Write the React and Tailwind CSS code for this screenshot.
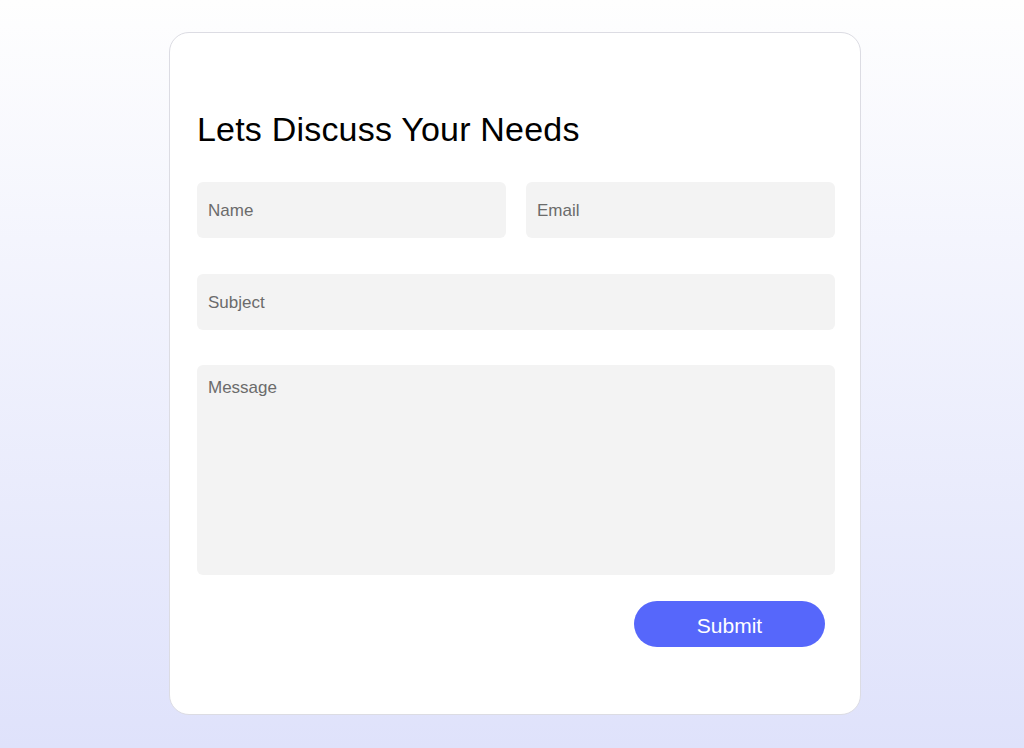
export default function App() {
  const font = { fontFamily: '"Liberation Sans", Arial, sans-serif' };
  return (
    <div
      className="w-full min-h-[748px] bg-gradient-to-b from-[#fefefe] to-[#dfe2fb] flex justify-start pl-[169px] pt-[32px]"
      style={font}
    >
      <div className="w-[692px] h-[683px] bg-white border border-[#dcdce3] rounded-[20px] pl-[27px] pr-[25px] pt-[76px] flex flex-col">
        <h1 className="text-[34px] leading-[40px] text-black font-normal tracking-[0.2px]">
          Lets Discuss Your Needs
        </h1>
        <div className="mt-[33px] grid grid-cols-2 gap-x-[20px]">
          <input
            placeholder="Name"
            className="h-[56px] bg-[#f3f3f3] rounded-[6px] px-[11px] pt-[2px] text-[17px] text-[#333] placeholder:text-[#6b6b6b] outline-none"
          />
          <input
            placeholder="Email"
            className="h-[56px] bg-[#f3f3f3] rounded-[6px] px-[11px] pt-[2px] text-[17px] text-[#333] placeholder:text-[#6b6b6b] outline-none"
          />
        </div>
        <input
          placeholder="Subject"
          className="mt-[36px] h-[56px] bg-[#f3f3f3] rounded-[6px] px-[11px] pt-[2px] text-[17px] text-[#333] placeholder:text-[#6b6b6b] outline-none"
        />
        <textarea
          placeholder="Message"
          className="mt-[35px] h-[210px] resize-none bg-[#f3f3f3] rounded-[6px] px-[11px] pt-[12px] text-[17px] leading-[22px] text-[#333] placeholder:text-[#6b6b6b] outline-none"
        />
        <div className="mt-[26px] flex justify-end pr-[10px]">
          <button className="w-[191px] h-[46px] rounded-full bg-[#5667fb] text-white text-[21px] pt-[3px]">
            Submit
          </button>
        </div>
      </div>
    </div>
  );
}
